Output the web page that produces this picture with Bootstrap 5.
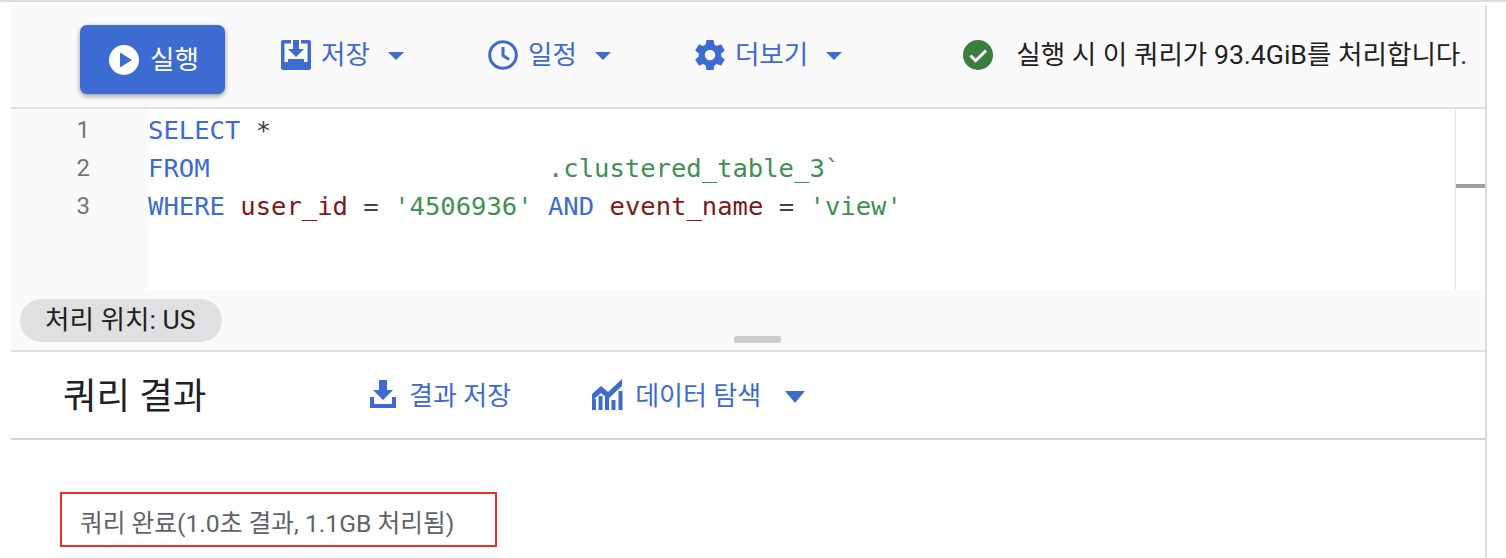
<!DOCTYPE html>
<html lang="ko">
<head>
<meta charset="utf-8">
<title>쿼리 결과</title>
<link href="https://cdn.jsdelivr.net/npm/bootstrap@5.3.0/dist/css/bootstrap.min.css" rel="stylesheet">
<style>
html,body{height:558px;overflow:hidden}
body{background:#fff;font-family:Roboto,"Noto Sans CJK KR",sans-serif;color:#202124;padding-top:2px;border-top:2px solid #ddd;margin:0}
.app-shell{margin-left:11px;margin-top:2px;width:1476px;height:560px;border-right:2px solid #dadce0}
.tool-bar{height:103px;background:#fafafa;border-bottom:2px solid #e0e0e0;padding:6px 0 0 69px}
.run-btn{width:145px;height:69px;background:#3c6bd1;border:0;border-radius:7px;color:#fff;font-size:26.6px;box-shadow:0 2px 5px rgba(0,0,0,.4);padding:0 0 0 29px;gap:11px}
.tool-item{color:#3f6ad0;font-size:26.6px;line-height:30px;gap:10px;margin-top:-9px}
.tool-item svg{flex:none}
.caret-down{width:0;height:0;border-left:8.5px solid transparent;border-right:8.5px solid transparent;border-top:8px solid #3f6ad0;margin-left:8px;margin-top:1px}
.item-save{margin-left:56px}
.item-sched{margin-left:84px}
.item-more{margin-left:84px}
.status-msg{margin-left:121px;font-size:26.6px;gap:23px;margin-top:-9px;white-space:nowrap;color:#212121}
.editor-area{height:181px}
.line-gutter{width:137px;background:#fafafa;line-height:38px;color:#757575;text-align:right;padding:2px 58px 0 0;font-family:Roboto,sans-serif;font-size:24px}
.code-box{font-family:"DejaVu Sans Mono",monospace;font-size:25.55px;line-height:38px;padding-top:2px;white-space:pre}
.kw{color:#3b6bd3}.idn{color:#7b1a1a}.str{color:#3f8f55}.opr{color:#37474f}
.mini-map{width:30px;border-left:1px solid #e5e5e5;padding-top:75px}
.mini-mark{height:4px;background:#a0a0a0}
.status-row{height:62px;background:#fafafa;padding:9px 0 0 9px;border-bottom:2px solid #e0e0e0}
.loc-chip{width:202px;height:43px;border-radius:22px;background:#e0e0e0;font-size:26.6px;color:#212121;padding-left:25px;line-height:41px}
.drag-grip{left:723px;bottom:7px;width:47px;height:7px;border-radius:2px;background:#ccc}
.result-head{height:88px;border-bottom:2px solid #d4d4d4;padding-left:52px}
.result-title{font-size:36.5px;color:#202124;width:307px;margin-top:5px}
.res-action{color:#3f6ad0;font-size:26px;gap:13px;margin-top:-2px}
.res-action span:not(.caret-down){padding-top:4px}
.act-explore{margin-left:81px;gap:12px}
.caret-big{border-left-width:10px;border-right-width:10px;border-top-width:12px;margin-left:12px;margin-top:6px}
.done-box{margin:52px 0 0 49px;width:437px;height:55px;border:2px solid #e5332a;padding-left:18px;font-size:24.7px;color:#5f6368;line-height:60px;white-space:nowrap}
</style>
</head>
<body>
<div class="app-shell">
  <div class="upper-pane">
    <div class="tool-bar d-flex align-items-center">
      <button class="run-btn d-flex align-items-center" type="button">
        <svg width="30" height="30" viewBox="0 0 30 30"><circle cx="15" cy="15" r="15" fill="#fff"/><path d="M11 7.500v15L23 15z" fill="#3c6bd1"/></svg>
        <span>실행</span>
      </button>
      <div class="tool-item item-save d-flex align-items-center">
        <svg width="30" height="30" viewBox="0 0 30 30"><path d="M2 0h26a2 2 0 0 1 2 2v26a2 2 0 0 1-2 2H2a2 2 0 0 1-2-2V2a2 2 0 0 1 2-2z" fill="#3f6ad0"/><path d="M3.500 3.500H10V0h10v3.500h6.500V22h-23z" fill="#fafafa"/><path d="M12 0h6v9h5l-8 8-8-8h5z" fill="#3f6ad0"/><path d="M7 19h16v3H7z" fill="#3f6ad0"/></svg>
        <span>저장</span><span class="caret-down"></span>
      </div>
      <div class="tool-item item-sched d-flex align-items-center">
        <svg width="30" height="30" viewBox="0 0 30 30"><circle cx="15" cy="15" r="13.300" fill="none" stroke="#3f6ad0" stroke-width="3"/><path d="M15 7v8.500l6 4" fill="none" stroke="#3f6ad0" stroke-width="3"/></svg>
        <span>일정</span><span class="caret-down"></span>
      </div>
      <div class="tool-item item-more d-flex align-items-center">
        <svg width="30" height="30" viewBox="2 2 20 20"><path d="M19.430 12.980c.04-.32.070-.64.070-.98s-.03-.66-.07-.98l2.110-1.650c.19-.15.240-.42.120-.64l-2-3.460c-.12-.22-.39-.3-.61-.22l-2.490 1c-.52-.4-1.080-.73-1.690-.98l-.38-2.650A.49.49 0 0 0 14 2h-4c-.25 0-.46.18-.49.42l-.38 2.650c-.61.25-1.170.59-1.690.98l-2.490-1c-.23-.09-.49 0-.61.22l-2 3.460c-.13.22-.07.49.12.64l2.110 1.650c-.04.32-.07.65-.07.98s.03.66.07.98l-2.110 1.650c-.19.15-.24.42-.12.64l2 3.460c.12.22.39.3.61.22l2.490-1c.52.4 1.080.73 1.690.98l.38 2.650c.03.24.24.42.49.42h4c.25 0 .46-.18.49-.42l.38-2.650c.61-.25 1.170-.59 1.690-.98l2.490 1c.23.09.49 0 .61-.22l2-3.460c.12-.22.07-.49-.12-.64zM12 15.500A3.500 3.500 0 1 1 12 8.500a3.500 3.500 0 0 1 0 7z" fill="#3f6ad0"/></svg>
        <span>더보기</span><span class="caret-down"></span>
      </div>
      <div class="status-msg d-flex align-items-center">
        <svg width="30" height="30" viewBox="0 0 30 30"><circle cx="15" cy="15" r="15" fill="#3a7d3e"/><path d="M7.500 15.500l5.200 5.200L23 10.500" fill="none" stroke="#fff" stroke-width="3"/></svg>
        <span>실행 시 이 쿼리가 93.4GiB를 처리합니다.</span>
      </div>
    </div>
    <div class="editor-area d-flex">
      <div class="line-gutter">1<br>2<br>3</div>
      <div class="code-box flex-grow-1"><span class="kw">SELECT</span> <span class="opr">*</span>
<span class="kw">FROM</span>                      <span class="str">.clustered_table_3`</span>
<span class="kw">WHERE</span> <span class="idn">user_id</span> <span class="opr">=</span> <span class="str">'4506936'</span> <span class="kw">AND</span> <span class="idn">event_name</span> <span class="opr">=</span> <span class="str">'view'</span></div>
      <div class="mini-map"><div class="mini-mark"></div></div>
    </div>
    <div class="status-row position-relative">
      <div class="loc-chip">처리 위치: US</div>
      <div class="drag-grip position-absolute"></div>
    </div>
  </div>
  <div class="result-head d-flex align-items-center">
    <div class="result-title">쿼리 결과</div>
    <div class="res-action d-flex align-items-center">
      <svg width="26" height="28" viewBox="0 0 26 28"><path d="M9 0h8v10h6L13 20 3 10h6zM0 17h4v7h18v-7h4v11H0z" fill="#3f6ad0"/></svg>
      <span>결과 저장</span>
    </div>
    <div class="res-action act-explore d-flex align-items-center">
      <svg width="31" height="31" viewBox="0 0 31 31"><path d="M0 31V20h4v11zM6.500 31V17h4v14zM13 31V18h4v13zM19.500 31V21h4v10zM26.500 31V12h4v19z" fill="#3f6ad0"/><path d="M0 15l9-8 7 6 14-13v7L16 20l-7-6-9 8z" fill="#3f6ad0"/></svg>
      <span>데이터 탐색</span><span class="caret-down caret-big"></span>
    </div>
  </div>
  <div class="done-box">쿼리 완료(1.0초 결과, 1.1GB 처리됨)</div>
</div>
<script src="https://cdn.jsdelivr.net/npm/bootstrap@5.3.0/dist/js/bootstrap.bundle.min.js"></script>
</body>
</html>
